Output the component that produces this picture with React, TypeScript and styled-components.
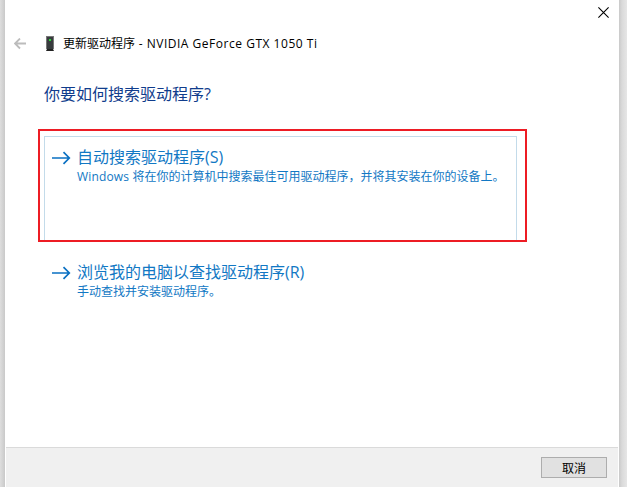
import React from "react";
import styled, { createGlobalStyle } from "styled-components";

const Global = createGlobalStyle`
  * { box-sizing: border-box; }
  body { margin: 0; background: #e4e4e4; overflow: hidden; }
`;

const Desktop = styled.div`
  width: 627px;
  height: 487px;
  padding: 0 8px 0 5px;
  overflow: hidden;
  background: linear-gradient(90deg, #dedede 0, #c9c9c9 5px, #c9c9c9 619px, #dadada 622px, #e6e6e6 627px);
  font-family: "Open Sans", "Noto Sans CJK SC", sans-serif;
`;

const Dialog = styled.main`
  position: relative;
  display: flex;
  flex-direction: column;
  height: 100%;
  background: #fff;
`;

const CloseRow = styled.div`
  display: flex;
  justify-content: flex-end;
  height: 30px;
  padding: 7px 10px 0 0;
`;

const IconButton = styled.button`
  display: flex;
  padding: 0;
  border: 0;
  background: none;
`;

const TitleBar = styled.header`
  display: flex;
  align-items: center;
  height: 28px;
  padding-left: 9px;
`;

const DeviceIcon = styled.svg`
  margin: 0 9px 2px 20px;
`;

const Line = styled.span<{ $size: number; $color: string }>`
  display: block;
  white-space: nowrap;
  font-size: ${(p) => p.$size}px;
  line-height: 20px;
  color: ${(p) => p.$color};
`;

const Latin = styled.span<{ $spacing?: number }>`
  letter-spacing: ${(p) => p.$spacing ?? 0}px;
`;

const Heading = styled.h1`
  margin: 26px 0 0 39px;
  font-size: 16px;
  font-weight: 400;
  line-height: 20px;
  color: #103c8c;
`;

const Options = styled.section`
  display: flex;
  flex-direction: column;
  gap: 11px;
  margin: 32px 0 0 39px;
  width: 473px;
`;

const Option = styled.button<{ $active?: boolean }>`
  display: flex;
  align-items: flex-start;
  gap: 6px;
  height: 104px;
  padding: 10px 0 0 7px;
  text-align: left;
  font-family: inherit;
  background: none;
  border: 1px solid ${(p) => (p.$active ? "#c3dbea" : "transparent")};
  border-bottom-width: 0;
`;

const OptionArrow = styled.svg`
  flex: none;
  margin-top: 4px;
`;

const Highlight = styled.div`
  position: absolute;
  left: 33px;
  top: 129px;
  width: 489px;
  height: 113px;
  border: 2px solid #ed1c24;
  pointer-events: none;
`;

const Footer = styled.footer`
  display: flex;
  justify-content: flex-end;
  margin: auto 1px 0;
  height: 40px;
  padding: 9px 11px 0 0;
  border-top: 1px solid #dadada;
  background: #f0f0f0;
`;

const Cancel = styled.button`
  width: 66px;
  height: 21px;
  padding: 0;
  border: 1px solid #adadad;
  background: #e1e1e1;
  font: 12px/19px "Noto Sans CJK SC", sans-serif;
  color: #000;
`;

const Arrow = () => (
  <OptionArrow width="19" height="14" viewBox="0 0 19 14" fill="none" stroke="#0a70c2" strokeWidth="1.7">
    <path d="M0 7H17.5M11.5 1.2L17.3 7L11.5 12.8" />
  </OptionArrow>
);

const BLUE = "#1278c4";

export default function App() {
  return (
    <Desktop>
      <Global />
      <Dialog>
        <CloseRow>
          <IconButton aria-label="关闭">
            <svg width="11" height="11" viewBox="0 0 11 11" stroke="#000" strokeWidth="1.1">
              <path d="M.4 .4L10.6 10.6M10.6 .4L.4 10.6" />
            </svg>
          </IconButton>
        </CloseRow>
        <TitleBar>
          <IconButton aria-label="返回">
            <svg width="12" height="12" viewBox="0 0 12 12" fill="none" stroke="#bcbcbc" strokeWidth="1.8">
              <path d="M12 5.5H1M6 .5L1 5.5L6 10.5" />
            </svg>
          </IconButton>
          <DeviceIcon width="8" height="15" viewBox="0 0 8 15">
            <path fill="#777" d="M0 0H8V13H0Z" />
            <path fill="#383c3e" d="M1 1H7V13H1Z" />
            <path fill="#28d936" d="M3 3H5V5H3Z" />
            <path fill="#222" d="M1 13H7L8 15H0Z" />
          </DeviceIcon>
          <Line $size={12} $color="#000">
            更新驱动程序<Latin $spacing={0.52}> - NVIDIA GeForce GTX 1050 Ti</Latin>
          </Line>
        </TitleBar>
        <Heading>你要如何搜索驱动程序?</Heading>
        <Options>
          <Option $active>
            <Arrow />
            <div>
              <Line $size={16} $color={BLUE}>自动搜索驱动程序<Latin>(S)</Latin></Line>
              <Line $size={12} $color={BLUE}><Latin $spacing={0.15}>Windows </Latin>将在你的计算机中搜索最佳可用驱动程序，并将其安装在你的设备上。</Line>
            </div>
          </Option>
          <Option>
            <Arrow />
            <div>
              <Line $size={16} $color={BLUE}>浏览我的电脑以查找驱动程序<Latin>(R)</Latin></Line>
              <Line $size={12} $color={BLUE}>手动查找并安装驱动程序。</Line>
            </div>
          </Option>
        </Options>
        <Highlight />
        <Footer>
          <Cancel>取消</Cancel>
        </Footer>
      </Dialog>
    </Desktop>
  );
}
